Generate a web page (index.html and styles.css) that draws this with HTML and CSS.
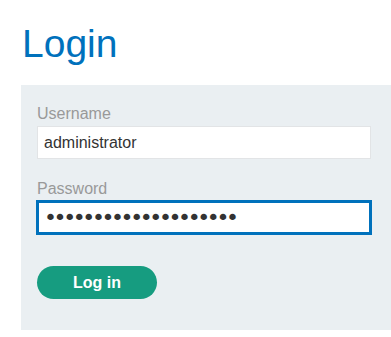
FILE: index.html
```html
<!DOCTYPE html>
<html lang="en">
<head>
<meta charset="utf-8">
<title>Login</title>
<link rel="stylesheet" href="styles.css">
</head>
<body>
<h1 class="title">Login</h1>
<form class="login-form">
  <label class="field-label" for="username">Username</label>
  <input class="field-input" id="username" type="text" value="administrator">
  <label class="field-label field-label-gap" for="password">Password</label>
  <input class="field-input field-input-focus" id="password" type="password" value="aaaaaaaaaaaaaaaaaaaa">
  <button class="login-btn" type="button">Log in</button>
</form>
</body>
</html>
```
FILE: styles.css
```css
html, body {
  margin: 0;
  padding: 0;
  background: #fff;
  font-family: "Liberation Sans", Arial, sans-serif;
}
.title {
  margin: 21px 0 18px 22px;
  font-size: 39px;
  line-height: 46px;
  font-weight: normal;
  color: #0071bc;
}
.login-form {
  margin-left: 21px;
  background: #eaeff2;
  padding: 20px 16px 31px 16px;
  display: flex;
  flex-direction: column;
  align-items: flex-start;
}
.field-label {
  display: block;
  font-size: 16px;
  line-height: 18px;
  color: #999;
  margin-bottom: 3px;
}
.field-label-gap {
  margin-top: 21px;
}
.field-input {
  box-sizing: border-box;
  width: 334px;
  height: 33px;
  margin: 0;
  padding: 0 6px;
  border: 1px solid #e2e4e6;
  background: #fff;
  font-family: "Liberation Sans", Arial, sans-serif;
  font-size: 16px;
  color: #333;
  outline: none;
  border-radius: 0;
}
.field-input-focus {
  border: 2px solid #0071bc;
  box-shadow: 0 0 0 1px #0071bc;
  padding: 0 5px;
  font-family: "DejaVu Sans", sans-serif;
  font-size: 22px;
  letter-spacing: -3.4px;
}
.login-btn {
  margin-top: 32px;
  width: 120px;
  height: 33px;
  border: none;
  border-radius: 17px;
  background: #169c80;
  color: #fff;
  font-family: "Liberation Sans", Arial, sans-serif;
  font-size: 16px;
  font-weight: bold;
  padding: 0;
}
```
